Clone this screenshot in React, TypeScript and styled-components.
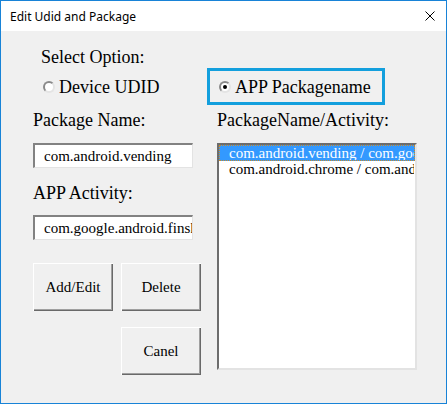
import React from 'react';
import styled, { createGlobalStyle } from 'styled-components';

const Global = createGlobalStyle`
  html, body { margin: 0; padding: 0; background: #ffffff; overflow: hidden; }
  * { box-sizing: border-box; }
`;

const Window = styled.div`
  width: 447px;
  height: 404px;
  border: 1px solid #1883d7;
  display: flex;
  flex-direction: column;
  background: #f0f0f0;
`;

const TitleBar = styled.div`
  height: 30px;
  flex: none;
  background: #ffffff;
  display: flex;
  align-items: center;
  justify-content: space-between;
  padding: 0 11px 0 9px;
  font-family: "Noto Sans", sans-serif;
  font-size: 12px;
  color: #000000;
`;

const CloseIcon = styled.svg`
  width: 10px;
  height: 10px;
  display: block;
`;

const Body = styled.div`
  flex: 1;
  padding: 16px 0 0 32px;
  font-family: "Liberation Serif", "Times New Roman", serif;
  font-size: 18px;
  line-height: 20px;
  color: #000000;
`;

const Heading = styled.div`
  margin-left: 8px;
  height: 20px;
  white-space: nowrap;
`;

const OptionRow = styled.div`
  display: grid;
  grid-template-columns: 174px 178px;
  height: 37px;
  margin-top: 1px;
`;

const RadioLabel = styled.label<{ $boxed?: boolean }>`
  display: flex;
  align-items: center;
  gap: 4px;
  white-space: nowrap;
  padding-left: ${p => (p.$boxed ? '9px' : '10px')};
  border: ${p => (p.$boxed ? '3px solid #139fdd' : 'none')};
`;

const RadioDot = styled.span<{ $checked?: boolean }>`
  width: 12px;
  height: 12px;
  flex: none;
  border-radius: 50%;
  background: #ffffff;
  border: 2px solid;
  border-color: #8a8a8a #e4e4e4 #e4e4e4 #8a8a8a;
  display: flex;
  align-items: center;
  justify-content: center;
  &::after {
    content: '';
    width: 4px;
    height: 4px;
    border-radius: 50%;
    background: ${p => (p.$checked ? '#000000' : 'transparent')};
  }
`;

const Columns = styled.div`
  display: grid;
  grid-template-columns: 174px 210px;
`;

const Column = styled.div<{ $inset?: number }>`
  display: flex;
  flex-direction: column;
  padding-left: ${p => p.$inset ?? 0}px;
`;

const FieldLabel = styled.div<{ $top: number }>`
  margin-top: ${p => p.$top}px;
  height: 20px;
  white-space: nowrap;
`;

const TextBox = styled.div<{ $top: number }>`
  margin-top: ${p => p.$top}px;
  width: 160px;
  height: 25px;
  background: #ffffff;
  border-top: 2px solid #828282;
  border-left: 2px solid #828282;
  border-right: 1px solid #e3e3e3;
  border-bottom: 1px solid #e3e3e3;
  padding-left: 9px;
  font-size: 15px;
  line-height: 22px;
  white-space: nowrap;
  overflow: hidden;
`;

const ButtonGrid = styled.div`
  margin-top: 23px;
  display: grid;
  grid-template-columns: 80px 80px;
  grid-auto-rows: 48px;
  column-gap: 8px;
  row-gap: 16px;
`;

const Button = styled.button<{ $col?: number }>`
  grid-column: ${p => p.$col ?? 'auto'};
  width: 80px;
  height: 48px;
  padding: 0;
  background: #f0f0f0;
  border: none;
  box-shadow: inset 1px 1px #ffffff, inset -1px -1px #696969, inset -2px -2px #a0a0a0;
  font-family: "Liberation Serif", "Times New Roman", serif;
  font-size: 15px;
  color: #000000;
`;

const ListBox = styled.div`
  margin-top: 13px;
  width: 200px;
  height: 227px;
  background: #ffffff;
  border-top: 2px solid #6d6d6d;
  border-left: 2px solid #6d6d6d;
  border-right: 2px solid #e3e3e3;
  border-bottom: 2px solid #e3e3e3;
  overflow: hidden;
  font-size: 15px;
`;

const ListItem = styled.div<{ $selected?: boolean }>`
  height: 16px;
  line-height: 14px;
  padding-left: 9px;
  white-space: nowrap;
  overflow: hidden;
  background: ${p => (p.$selected ? '#3399ff' : 'transparent')};
  color: ${p => (p.$selected ? '#ffffff' : '#000000')};
  border: 1px dotted ${p => (p.$selected ? '#c88a2a' : 'transparent')};
`;

export default function App() {
  return (
    <>
      <Global />
      <Window>
        <TitleBar>
          <span>Edit Udid and Package</span>
          <CloseIcon viewBox="0 0 10 10">
            <path d="M0.5 0.5 L9.5 9.5 M9.5 0.5 L0.5 9.5" stroke="#000" strokeWidth="1" fill="none" />
          </CloseIcon>
        </TitleBar>
        <Body>
          <Heading>Select Option:</Heading>
          <OptionRow>
            <RadioLabel>
              <RadioDot />
              Device UDID
            </RadioLabel>
            <RadioLabel $boxed>
              <RadioDot $checked />
              APP Packagename
            </RadioLabel>
          </OptionRow>
          <Columns>
            <Column>
              <FieldLabel $top={5}>Package Name:</FieldLabel>
              <TextBox $top={13}>com.android.vending</TextBox>
              <FieldLabel $top={15}>APP Activity:</FieldLabel>
              <TextBox $top={12}>com.google.android.finsky.activities.MainActivity</TextBox>
              <ButtonGrid>
                <Button>Add/Edit</Button>
                <Button>Delete</Button>
                <Button $col={2}>Canel</Button>
              </ButtonGrid>
            </Column>
            <Column $inset={10}>
              <FieldLabel $top={5}>PackageName/Activity:</FieldLabel>
              <ListBox>
                <ListItem $selected>com.android.vending / com.google.android.finsky.activities.MainActivity</ListItem>
                <ListItem>com.android.chrome / com.android.chrome.Main</ListItem>
              </ListBox>
            </Column>
          </Columns>
        </Body>
      </Window>
    </>
  );
}
